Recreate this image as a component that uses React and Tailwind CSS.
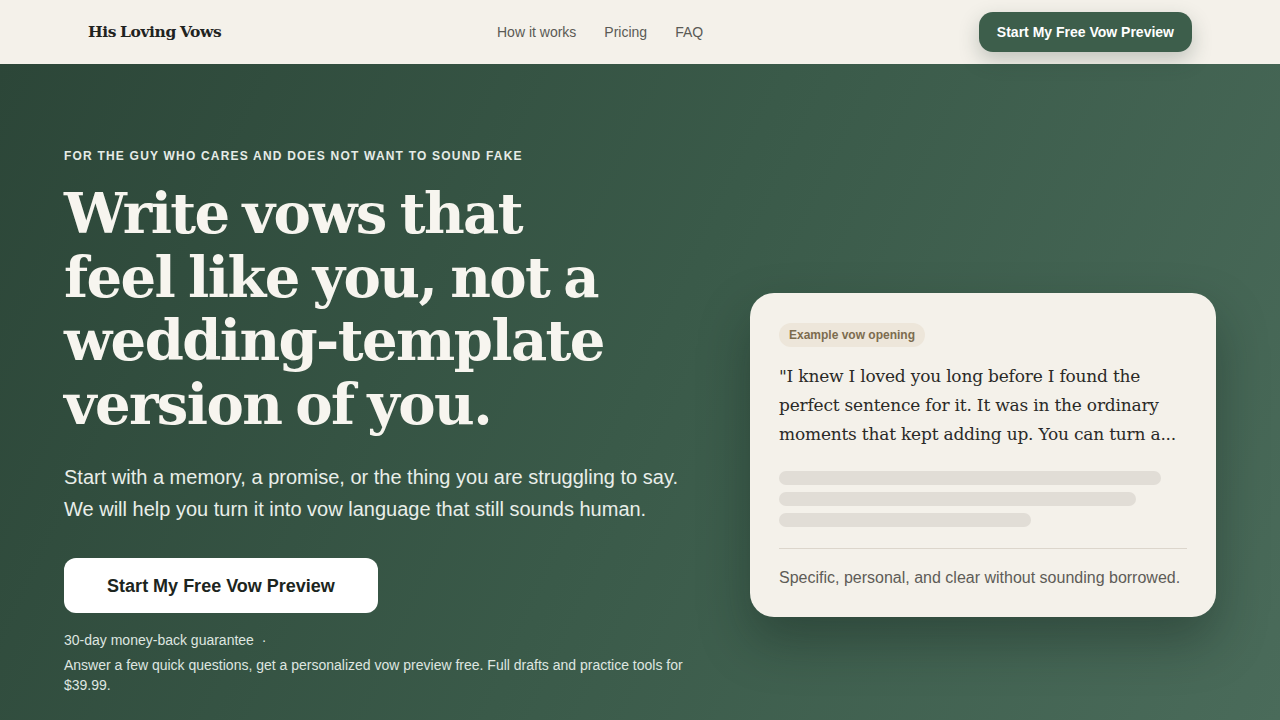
import React from 'react';

const serif = { fontFamily: '"DejaVu Serif", "Liberation Serif", serif' };

function Header() {
  return (
    <header className="h-16 bg-[#f4f1ea] flex items-center justify-between px-[88px] relative z-10">
      <div className="text-[15.5px] font-bold text-[#1f231f] tracking-[-0.4px] [word-spacing:-1px]" style={serif}>
        His Loving Vows
      </div>
      <nav className="flex items-center gap-7 text-sm text-[#5a5a55]">
        <a href="#how">How it works</a>
        <a href="#pricing">Pricing</a>
        <a href="#faq">FAQ</a>
      </nav>
      <button className="h-10 px-[18px] rounded-[14px] bg-[#3d5e4b] text-white text-sm font-bold shadow-[0_8px_20px_rgba(40,60,50,0.25)]">
        Start My Free Vow Preview
      </button>
    </header>
  );
}

function PreviewCard() {
  return (
    <div className="w-[466px] rounded-[24px] bg-[#f4f1ea] px-[29px] pt-[29px] pb-[27px] shadow-[0_24px_50px_rgba(15,30,22,0.35)]">
      <span className="inline-block rounded-full bg-[#ede6da] px-[10px] py-[4px] text-xs font-bold text-[#7c6c4f]">
        Example vow opening
      </span>
      <p className="mt-[15px] text-[17px] leading-[29px] text-[#2a2a27] tracking-[-0.2px]" style={serif}>
        "I knew I loved you long before I found the perfect sentence for it. It was in the ordinary
        moments that kept adding up. You can turn a...
      </p>
      <div className="mt-[22px] space-y-[7px]">
        <div className="h-[14px] w-[382px] rounded-full bg-[#e1ddd6]" />
        <div className="h-[14px] w-[357px] rounded-full bg-[#e1ddd6]" />
        <div className="h-[14px] w-[252px] rounded-full bg-[#e1ddd6]" />
      </div>
      <div className="mt-[21px] border-t border-[#dcd6cc] pt-[17px] text-base text-[#5e5c57]">
        Specific, personal, and clear without sounding borrowed.
      </div>
    </div>
  );
}

export default function App() {
  return (
    <div className="min-h-screen" style={{ fontFamily: '"Liberation Sans", Arial, sans-serif' }}>
      <Header />
      <main className="h-[656px] bg-[linear-gradient(115deg,#2c4638_0%,#3a5a49_50%,#4a6b5a_100%)] overflow-hidden">
        <div className="flex items-start justify-between px-16 pt-[84px]">
          <div className="w-[630px]">
            <p className="text-xs font-bold tracking-[0.1em] uppercase text-[#e6ece7]">
              For the guy who cares and does not want to sound fake
            </p>
            <h1
              className="mt-[18px] text-[56px] leading-[63.5px] font-bold text-[#f7f5ef] tracking-[-1.6px] [word-spacing:-4px]"
              style={serif}
            >
              Write vows that<br />
              feel like you, not a<br />
              wedding-template<br />
              version of you.
            </h1>
            <p className="mt-[25px] text-xl leading-8 text-[#e9eee9]">
              Start with a memory, a promise, or the thing you are struggling to say.
              <br />
              We will help you turn it into vow language that still sounds human.
            </p>
            <button className="mt-[33px] w-[314px] h-[55px] rounded-xl bg-white text-lg font-bold text-[#1c2520]">
              Start My Free Vow Preview
            </button>
            <p className="mt-[17px] text-sm text-[#dfe6e0]">
              30-day money-back guarantee <span className="ml-1">·</span>
            </p>
            <p className="mt-[5px] text-sm leading-5 text-[#dfe6e0]">
              Answer a few quick questions, get a personalized vow preview free. Full drafts and practice tools for
              $39.99.
            </p>
          </div>
          <div className="mt-[145px]">
            <PreviewCard />
          </div>
        </div>
      </main>
    </div>
  );
}
